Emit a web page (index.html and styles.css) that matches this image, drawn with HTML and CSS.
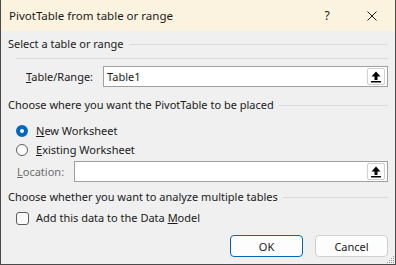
FILE: index.html
```html
<!DOCTYPE html>
<html lang="en">
  <head>
    <meta charset="utf-8" />
    <title>PivotTable from table or range</title>
    <link rel="stylesheet" href="styles.css">
  </head>
  <body>
    <div class="dialog">
      <div class="titlebar">
        <span class="title">PivotTable from table or range</span>
        <span class="help">?</span>
        <span class="close">
          <svg width="10" height="10" viewBox="0 0 10 10"><path d="M0.5 0.5 L9.5 9.5 M9.5 0.5 L0.5 9.5" stroke="#1a1a1a" stroke-width="1" fill="none"/></svg>
        </span>
      </div>

      <div class="content">
        <div class="group-head first">Select a table or range</div>
        <div class="rule"></div>

        <div class="field-row range-row">
          <label class="field-label range-label"><u>T</u>able/Range:</label>
          <div class="field-input">
            <span class="field-value">Table1</span>
            <span class="pick-button">
              <svg width="18" height="17" viewBox="0 0 18 17"><path d="M9 3.5 L13.5 8.5 L10.5 8.5 L10.5 12 L7.5 12 L7.5 8.5 L4.5 8.5 Z" fill="#000"/><rect x="4" y="13" width="10" height="1.5" fill="#000"/></svg>
            </span>
          </div>
        </div>

        <div class="group-head second">Choose where you want the PivotTable to be placed</div>

        <div class="option-row first-option">
          <span class="radio checked"></span>
          <span><u>N</u>ew Worksheet</span>
        </div>
        <div class="option-row second-option">
          <span class="radio"></span>
          <span><u>E</u>xisting Worksheet</span>
        </div>

        <div class="field-row location-row">
          <label class="field-label location-label disabled"><u>L</u>ocation:</label>
          <div class="field-input">
            <span class="field-value"></span>
            <span class="pick-button">
              <svg width="18" height="17" viewBox="0 0 18 17"><path d="M9 3.5 L13.5 8.5 L10.5 8.5 L10.5 12 L7.5 12 L7.5 8.5 L4.5 8.5 Z" fill="#000"/><rect x="4" y="13" width="10" height="1.5" fill="#000"/></svg>
            </span>
          </div>
        </div>

        <div class="group-head third">Choose whether you want to analyze multiple tables</div>

        <div class="option-row check-row">
          <span class="checkbox"></span>
          <span>Add this data to the Data <u>M</u>odel</span>
        </div>

        <div class="button-row">
          <button class="dlg-button default">OK</button>
          <button class="dlg-button">Cancel</button>
        </div>
      </div>

      <svg class="grip" width="9" height="9" viewBox="0 0 9 9">
        <rect x="7" y="1" width="1" height="1" fill="#9a9a9a"/>
        <rect x="5" y="3" width="1" height="1" fill="#9a9a9a"/>
        <rect x="7" y="3" width="1" height="1" fill="#9a9a9a"/>
        <rect x="3" y="5" width="1" height="1" fill="#9a9a9a"/>
        <rect x="5" y="5" width="1" height="1" fill="#9a9a9a"/>
        <rect x="7" y="5" width="1" height="1" fill="#9a9a9a"/>
        <rect x="1" y="7" width="1" height="1" fill="#9a9a9a"/>
        <rect x="3" y="7" width="1" height="1" fill="#9a9a9a"/>
        <rect x="5" y="7" width="1" height="1" fill="#9a9a9a"/>
        <rect x="7" y="7" width="1" height="1" fill="#9a9a9a"/>
      </svg>
    </div>
  </body>
</html>
```

FILE: styles.css
```css
body {
     margin: 0;
     font-family: "Noto Sans", "Open Sans", sans-serif;
     font-size: 11px;
     color: #1a1a1a;
}

.dialog {
     position: relative;
     width: 396px;
     height: 265px;
     box-sizing: border-box;
     border: 1px solid #4a4a4a;
     border-top: none;
     background-color: #f0f0f0;
     display: flex;
     flex-direction: column;
}

.titlebar {
     height: 31px;
     background-color: #fbf3df;
     display: flex;
     align-items: center;
     padding-left: 8px;
     font-size: 11.5px;
}

.title {
     flex: 1;
}

.help {
     width: 44px;
     text-align: center;
     font-size: 12px;
}

.close {
     width: 46px;
     display: flex;
     justify-content: center;
}

.content {
     padding: 0 7px;
     display: flex;
     flex-direction: column;
}

.group-head {
     display: flex;
     align-items: center;
     gap: 5px;
     height: 16px;
     line-height: 16px;
     white-space: nowrap;
}

.group-head::after {
     content: "";
     flex: 1;
     border-top: 1px solid #dadada;
}

.group-head.first {
     margin-top: 5px;
}

.group-head.second {
     margin-top: 10px;
}

.group-head.third {
     margin-top: 7px;
}

.rule {
     margin: 6px 0 0 8px;
     border-top: 1px solid #dadada;
}

.field-row {
     display: flex;
     align-items: center;
     height: 21px;
}

.range-row {
     margin-top: 7px;
}

.location-row {
     margin-top: 3px;
}

.field-label {
     box-sizing: border-box;
}

.range-label {
     width: 95px;
     padding-left: 18px;
}

.location-label {
     width: 66px;
     padding-left: 9px;
}

.disabled {
     color: #6d6d6d;
}

.field-input {
     flex: 1;
     height: 21px;
     box-sizing: border-box;
     border: 1px solid #a0a0a0;
     background-color: #fff;
     display: flex;
     align-items: center;
     padding: 0 2px 0 3px;
}

.field-value {
     flex: 1;
}

.pick-button {
     width: 18px;
     height: 17px;
     box-sizing: border-box;
     border: 1px solid #d0d0d0;
     border-radius: 2px;
     background-color: #fff;
     display: flex;
}

.pick-button svg {
     margin: -1px;
}

.option-row {
     display: flex;
     align-items: center;
     height: 16px;
     line-height: 16px;
     padding-left: 8px;
}

.first-option {
     margin-top: 10px;
}

.second-option {
     margin-top: 3px;
}

.check-row {
     margin-top: 5px;
     gap: 7px;
}

.radio {
     width: 12px;
     height: 12px;
     box-sizing: border-box;
     border: 1px solid #5c5c5c;
     border-radius: 50%;
     margin-right: 8px;
     background-color: #fff;
}

.radio.checked {
     border: 4px solid #0067c0;
     background-color: #fff;
}

.checkbox {
     width: 13px;
     height: 13px;
     box-sizing: border-box;
     border: 1px solid #5c5c5c;
     border-radius: 3px;
     background-color: #fafafa;
}

.button-row {
     margin-top: 9px;
     display: flex;
     justify-content: flex-end;
     gap: 12px;
}

.dlg-button {
     width: 73px;
     height: 22px;
     box-sizing: border-box;
     border: 1px solid #d0d0d0;
     border-radius: 4px;
     background-color: #fdfdfd;
     font-family: inherit;
     font-size: 11px;
     color: #1a1a1a;
     padding: 0;
}

.dlg-button.default {
     border: 1px solid #0067c0;
}

.grip {
     position: absolute;
     right: 0;
     bottom: 0;
}
```
